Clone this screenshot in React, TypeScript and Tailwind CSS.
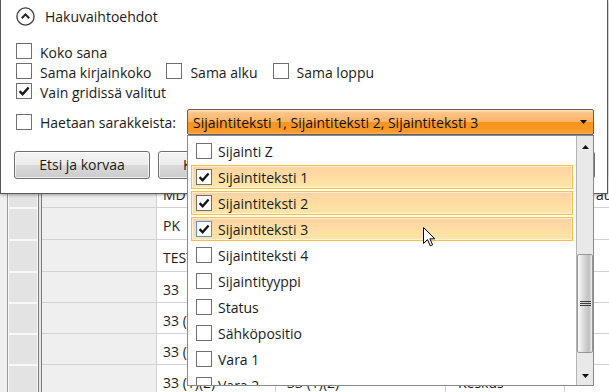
import React from "react";

type Item = { label: string; checked?: boolean; hl?: boolean; focus?: boolean };

const items: Item[] = [
  { label: "Sijainti Z" },
  { label: "Sijaintiteksti 1", checked: true, hl: true },
  { label: "Sijaintiteksti 2", checked: true, hl: true },
  { label: "Sijaintiteksti 3", checked: true, hl: true, focus: true },
  { label: "Sijaintiteksti 4" },
  { label: "Sijaintityyppi" },
  { label: "Status" },
  { label: "Sähköpositio" },
  { label: "Vara 1" },
  { label: "Vara 2" },
];

type Row = { h: string; b: string; c: string; d: string; e: string };

const gridRows: Row[] = [
  { h: "h-[31px]", b: "MD 1", c: "", d: "", e: "au" },
  { h: "h-[32px]", b: "PK", c: "", d: "", e: "" },
  { h: "h-[32px]", b: "TEST", c: "", d: "", e: "" },
  { h: "h-[31px]", b: "33", c: "", d: "", e: "" },
  { h: "h-[31px]", b: "33 (1)", c: "", d: "", e: "" },
  { h: "h-[31px]", b: "33 (1)(2)", c: "", d: "", e: "" },
  { h: "h-[31px]", b: "33 (1)(2)", c: "33 (1)(2)", d: "Keskus", e: "" },
];

function Check() {
  return (
    <svg width="12" height="12" viewBox="0 0 12 12">
      <path d="M1.6 6.1 L4.6 9.2 L10.6 2.4" fill="none" stroke="#151515" strokeWidth="2.3" />
    </svg>
  );
}

function Box({ checked = false, focus = false }: { checked?: boolean; focus?: boolean }) {
  return (
    <span
      className={
        "flex h-[16px] w-[16px] shrink-0 items-center justify-center border bg-white " +
        (focus ? "border-[#5b8fd6]" : "border-[#707070]")
      }
    >
      {checked ? <Check /> : null}
    </span>
  );
}

function Opt({ label, checked = false, first = false }: { label: string; checked?: boolean; first?: boolean }) {
  return (
    <div className={"flex h-[20px] items-center " + (first ? "" : "ml-[15px]")}>
      <Box checked={checked} />
      <span className="ml-[8px] pt-[3px] leading-[18px]">{label}</span>
    </div>
  );
}

function GridRow({ r }: { r: Row }) {
  return (
    <div className={"flex shrink-0 " + r.h}>
      <div className="w-[8px] shrink-0 border-r border-[#9c9c9c] bg-[#f0f0f0]" />
      <div className="w-[30px] shrink-0 border border-[#f8f8f8] bg-[#e3e3e3]" />
      <div className="w-[4px] shrink-0 border-l border-r border-[#7c7c7c] bg-[#e6e6e6]" />
      <div className="w-[115px] shrink-0 border-b border-r border-[#d2d2d2] bg-[#efefef]" />
      <div className="flex w-[119px] shrink-0 items-center overflow-hidden whitespace-nowrap border-b border-r border-[#d2d2d2] bg-white pl-[6px] pt-[4px]">
        {r.b}
      </div>
      <div className="flex w-[170px] shrink-0 items-center overflow-hidden whitespace-nowrap border-b border-r border-[#d2d2d2] bg-white pl-[11px] pt-[4px]">
        {r.c}
      </div>
      <div className="flex w-[119px] shrink-0 items-center overflow-hidden whitespace-nowrap border-b border-r border-[#d2d2d2] bg-white pl-[12px] pt-[4px]">
        {r.d}
      </div>
      <div className="flex flex-1 items-center overflow-hidden whitespace-nowrap border-b border-[#d2d2d2] bg-white pl-[31px] pt-[4px]">
        {r.e}
      </div>
    </div>
  );
}

export default function App() {
  return (
    <div className="relative h-[392px] w-[609px] overflow-hidden bg-[#f0f0f0] font-['Open_Sans',sans-serif] text-[14px] text-[#1b1b1b]">
      {/* background grid */}
      <div className="flex h-full flex-col text-[#1e1e1e]">
        <div className="h-[177px] shrink-0 bg-[#f0f0f0]" />
        {gridRows.map((r, i) => (
          <GridRow key={i} r={r} />
        ))}
      </div>

      {/* search options panel */}
      <div className="absolute left-0 top-0 flex h-[194px] w-[608px] flex-col border-b border-l border-r border-[#5a5a5a] bg-white shadow-[0_1px_3px_rgba(0,0,0,0.35)]">
        <div className="mt-[7px] flex h-[19px] items-center pl-[15px]">
          <svg width="19" height="19" viewBox="0 0 19 19">
            <circle cx="9.5" cy="9.5" r="8.6" fill="none" stroke="#3a3a3a" strokeWidth="1.3" />
            <path d="M5.8 11.2 L9.5 7.4 L13.2 11.2" fill="none" stroke="#222" strokeWidth="2" />
          </svg>
          <span className="ml-[10px] leading-[19px]">Hakuvaihtoehdot</span>
        </div>

        <div className="mt-[15px] flex flex-col pl-[15px]">
          <div className="flex">
            <Opt label="Koko sana" first />
          </div>
          <div className="flex">
            <Opt label="Sama kirjainkoko" first />
            <Opt label="Sama alku" />
            <Opt label="Sama loppu" />
          </div>
          <div className="flex">
            <Opt label="Vain gridissä valitut" checked first />
          </div>
        </div>

        <div className="mt-[8px] flex h-[26px] items-center pl-[15px]">
          <Box />
          <span className="ml-[8px] w-[147px] shrink-0 pt-[2px] leading-[18px]">Haetaan sarakkeista:</span>
          <div className="flex h-[26px] w-[407px] shrink-0 items-center rounded-[2px] border border-[#5e5e5e] bg-[linear-gradient(to_bottom,#fee2bd_0%,#fcc488_12%,#fbb466_48%,#f8941f_52%,#f99a2a_92%,#fbb567_100%)] pl-[5px] pr-[6px]">
            <span className="flex-1 whitespace-nowrap pt-[1px] leading-[18px] text-[#111]">
              Sijaintiteksti 1, Sijaintiteksti 2, Sijaintiteksti 3
            </span>
            <svg width="7" height="4" viewBox="0 0 7 4">
              <path d="M0 0 L7 0 L3.5 4 Z" fill="#111" />
            </svg>
          </div>
        </div>

        <div className="mt-[16px] flex h-[28px] pl-[13px] pr-[12px]">
          <button className="h-[28px] w-[136px] rounded-[3px] border border-[#707070] bg-[linear-gradient(to_bottom,#f4f4f4_0%,#ececec_48%,#dadada_52%,#cbcbcb_100%)] shadow-[inset_0_0_0_1px_rgba(255,255,255,0.7)] leading-[26px]">
            Etsi ja korvaa
          </button>
          <button className="ml-[8px] h-[28px] w-[136px] rounded-[3px] border border-[#707070] bg-[linear-gradient(to_bottom,#f4f4f4_0%,#ececec_48%,#dadada_52%,#cbcbcb_100%)] shadow-[inset_0_0_0_1px_rgba(255,255,255,0.7)] leading-[26px]">
            Korvaa kaikki
          </button>
          <button className="ml-auto h-[28px] w-[100px] rounded-[3px] border border-[#707070] bg-[linear-gradient(to_bottom,#f4f4f4_0%,#ececec_48%,#dadada_52%,#cbcbcb_100%)] shadow-[inset_0_0_0_1px_rgba(255,255,255,0.7)] leading-[26px]">
            Sulje
          </button>
        </div>
      </div>

      {/* dropdown list */}
      <div className="absolute left-[187px] top-[135px] flex h-[251px] w-[407px] border border-[#8a8a8a] bg-white">
        <div className="flex flex-1 flex-col overflow-hidden pt-[3px]">
          {items.map((it) => (
            <div
              key={it.label}
              className={
                "mx-[3px] mb-[2px] flex h-[24px] shrink-0 items-center border pl-[4px] " +
                (it.hl
                  ? "border-[#f3c150] bg-[linear-gradient(to_bottom,#fed3a0,#fee6a6)] shadow-[inset_0_0_0_1px_rgba(255,255,255,0.55)]"
                  : "border-transparent")
              }
            >
              <Box checked={it.checked} focus={it.focus} />
              <span className="ml-[6px] whitespace-nowrap pt-[1px] leading-[18px]">{it.label}</span>
            </div>
          ))}
        </div>
        <div className="flex w-[17px] shrink-0 flex-col border-l border-[#b4b4b4] bg-[#e9e9e9]">
          <div className="flex h-[22px] shrink-0 items-center justify-center">
            <svg width="7" height="4" viewBox="0 0 7 4">
              <path d="M0 4 L7 4 L3.5 0 Z" fill="#111" />
            </svg>
          </div>
          <div className="h-[96px] shrink-0" />
          <div className="flex h-[99px] shrink-0 flex-col items-center justify-center gap-[1px] rounded-[2px] border border-[#979797] bg-[linear-gradient(to_right,#fbfbfb_0%,#e6e6e6_25%,#d2d2d2_50%,#bfbfbf_80%,#f2f2f2_100%)]">
            <div className="h-[1px] w-[11px] bg-[#3c3c3c]" />
            <div className="h-[1px] w-[11px] bg-[#3c3c3c]" />
            <div className="h-[1px] w-[11px] bg-[#3c3c3c]" />
          </div>
          <div className="flex-1" />
          <div className="flex h-[19px] shrink-0 items-center justify-center">
            <svg width="7" height="4" viewBox="0 0 7 4">
              <path d="M0 0 L7 0 L3.5 4 Z" fill="#111" />
            </svg>
          </div>
        </div>
      </div>

      {/* mouse cursor */}
      <svg className="absolute left-[423px] top-[227px]" width="13" height="20" viewBox="0 0 13 20">
        <path
          d="M0.5 0.5 L0.5 16.5 L4.5 12.6 L7.3 18.8 L9.6 17.8 L6.9 11.8 L11.8 11.8 Z"
          fill="#fff"
          stroke="#000"
          strokeWidth="1"
          strokeLinejoin="miter"
        />
      </svg>
    </div>
  );
}
